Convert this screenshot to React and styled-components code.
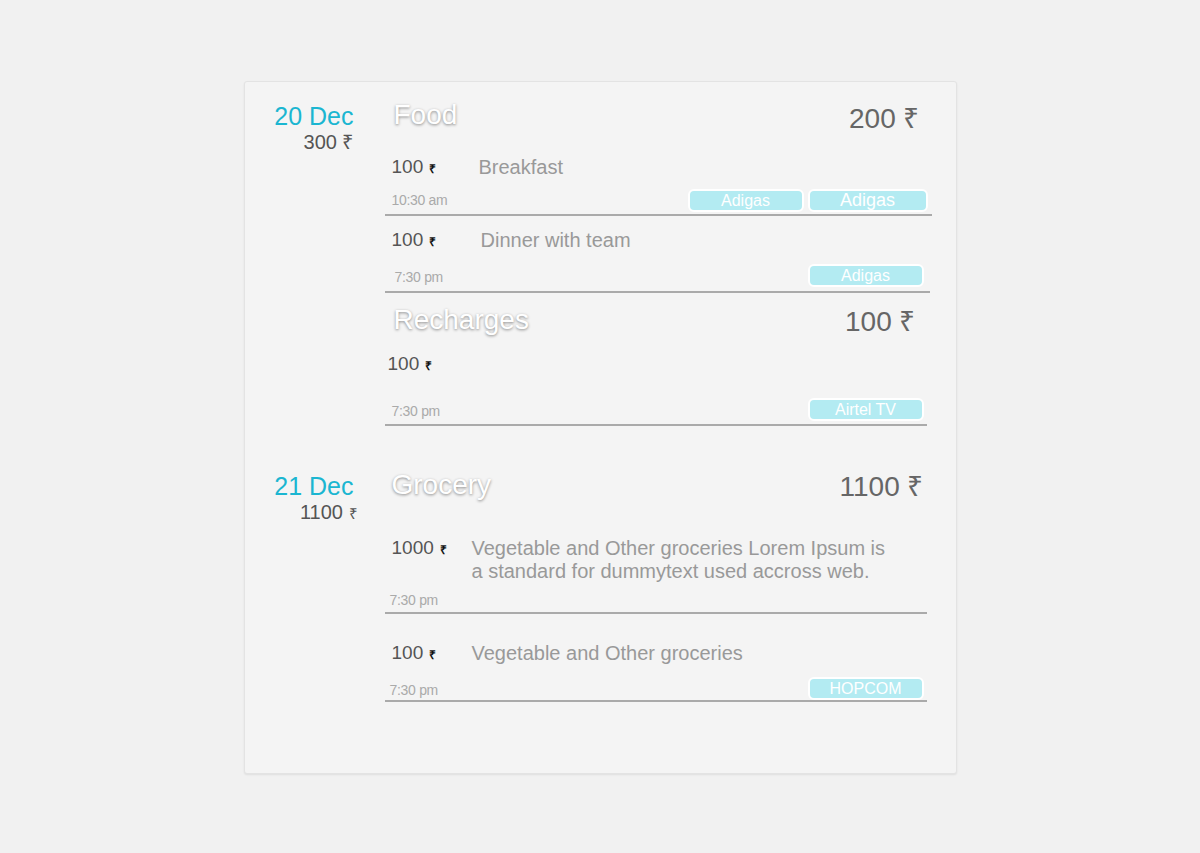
import React from "react";
import styled, { createGlobalStyle } from "styled-components";

const Global = createGlobalStyle`
  body {
    margin: 0;
    background: #f1f1f1;
    font-family: "Liberation Sans", Arial, sans-serif;
  }
`;

const Page = styled.div`
  display: flex;
  justify-content: center;
  padding-top: 81px;
  min-height: 853px;
  box-sizing: border-box;
`;

const Card = styled.div`
  width: 713px;
  height: 693px;
  box-sizing: border-box;
  background: #f4f4f4;
  border: 1px solid #e3e3e3;
  border-radius: 3px;
  box-shadow: 0 1px 2px rgba(0, 0, 0, 0.08);
  padding: 15px 24px 0 0;
`;

const Day = styled.div`
  display: grid;
  grid-template-columns: 112px 1fr;
  column-gap: 28px;
  margin-top: ${(p) => p.$top || 0}px;
`;

const DateCol = styled.div`
  text-align: right;
  padding-top: ${(p) => p.$pad || 5}px;
  padding-right: 3px;
`;

const DateLabel = styled.div`
  color: #1bb6d1;
  font-size: 25px;
  line-height: 28px;
`;

const DayTotal = styled.div`
  color: #555;
  font-size: 20px;
  line-height: 24px;
  margin-right: ${(p) => p.$shift || 0}px;
`;

const SmallRupee = styled.span`
  font-size: 15px;
`;

const Categories = styled.div`
  display: flex;
  flex-direction: column;
`;

const Category = styled.div`
  margin-top: ${(p) => p.$top || 0}px;
`;

const Header = styled.div`
  display: flex;
  justify-content: space-between;
  align-items: center;
  height: 36px;
  padding-left: ${(p) => p.$left || 9}px;
  padding-right: ${(p) => p.$right || 12}px;
`;

const Title = styled.div`
  color: #fff;
  font-size: 28px;
  text-shadow: 0 1px 3px rgba(0, 0, 0, 0.45);
`;

const Total = styled.div`
  color: #666;
  font-size: 28px;
  padding-top: ${(p) => p.$drop || 0}px;
`;

const Item = styled.div`
  margin-top: ${(p) => p.$top || 0}px;
  margin-right: ${(p) => p.$short || 0}px;
  padding: 0 5px ${(p) => p.$bottom || 0}px 7px;
  border-bottom: 2px solid #aaa;
`;

const MainRow = styled.div`
  display: grid;
  grid-template-columns: ${(p) => p.$amountWidth || 87}px 1fr;
  align-items: start;
  min-height: 24px;
`;

const Amount = styled.div`
  color: #555;
  font-size: 19px;
  line-height: 24px;
  margin-left: ${(p) => p.$shift || 0}px;
`;

const Rupee = styled.span`
  color: #111;
  font-size: 12px;
  line-height: 1;
  font-weight: bold;
  margin-left: 6px;
`;

const Desc = styled.div`
  color: #999;
  font-size: 20px;
  line-height: 23px;
  max-width: 420px;
  padding-top: 1px;
`;

const MetaRow = styled.div`
  display: flex;
  align-items: center;
  justify-content: space-between;
  height: 24px;
  margin-top: ${(p) => p.$top || 9}px;
`;

const Time = styled.div`
  color: #aaa;
  font-size: 14px;
  letter-spacing: -0.3px;
  margin-left: ${(p) => p.$shift || 0}px;
  padding-top: ${(p) => p.$drop || 0}px;
`;

const Tags = styled.div`
  display: flex;
  gap: 4px;
  margin-right: ${(p) => p.$right || 0}px;
`;

const Tag = styled.div`
  width: ${(p) => p.$w || 112}px;
  height: 19px;
  line-height: 19px;
  background: #b3ebf2;
  border: 2px solid #fff;
  border-radius: 6px;
  color: #fff;
  font-size: ${(p) => p.$size || 16}px;
  text-align: center;
`;

const Money = ({ value, shift }) => (
  <Amount $shift={shift}>
    {value}
    <Rupee>₹</Rupee>
  </Amount>
);

export default function App() {
  return (
    <>
      <Global />
      <Page>
        <Card>
          <Day>
            <DateCol>
              <DateLabel>20 Dec</DateLabel>
              <DayTotal>300 ₹</DayTotal>
            </DateCol>
            <Categories>
              <Category>
                <Header>
                  <Title>Food</Title>
                  <Total $drop={4}>200 ₹</Total>
                </Header>
                <Item $top={22} $bottom={2}>
                  <MainRow $amountWidth={87}>
                    <Money value="100" />
                    <Desc>Breakfast</Desc>
                  </MainRow>
                  <MetaRow $top={9}>
                    <Time>10:30 am</Time>
                    <Tags $right={-1}>
                      <Tag $w={112}>Adigas</Tag>
                      <Tag $w={116} $size={18}>Adigas</Tag>
                    </Tags>
                  </MetaRow>
                </Item>
                <Item $top={12} $bottom={4} $short={2}>
                  <MainRow $amountWidth={89}>
                    <Money value="100" />
                    <Desc>Dinner with team</Desc>
                  </MainRow>
                  <MetaRow $top={11}>
                    <Time $shift={3} $drop={3}>7:30 pm</Time>
                    <Tags $right={1}>
                      <Tag $w={112}>Adigas</Tag>
                    </Tags>
                  </MetaRow>
                </Item>
              </Category>
              <Category $top={9}>
                <Header $right={16}>
                  <Title>Recharges</Title>
                  <Total>100 ₹</Total>
                </Header>
                <Item $top={14} $bottom={3} $short={5}>
                  <MainRow>
                    <Money value="100" shift={-4} />
                    <Desc />
                  </MainRow>
                  <MetaRow $top={21}>
                    <Time $drop={4}>7:30 pm</Time>
                    <Tags $right={-2}>
                      <Tag $w={112}>Airtel TV</Tag>
                    </Tags>
                  </MetaRow>
                </Item>
              </Category>
            </Categories>
          </Day>
          <Day $top={41}>
            <DateCol $pad={5}>
              <DateLabel>21 Dec</DateLabel>
              <DayTotal $shift={-4}>
                1100 <SmallRupee>₹</SmallRupee>
              </DayTotal>
            </DateCol>
            <Categories>
              <Category>
                <Header $left={7} $right={8}>
                  <Title>Grocery</Title>
                  <Total>1100 ₹</Total>
                </Header>
                <Item $top={33} $short={5}>
                  <MainRow $amountWidth={80}>
                    <Money value="1000" />
                    <Desc>
                      Vegetable and Other groceries Lorem Ipsum is a standard for dummytext used accross web.
                    </Desc>
                  </MainRow>
                  <MetaRow $top={5}>
                    <Time $shift={-2}>7:30 pm</Time>
                  </MetaRow>
                </Item>
                <Item $top={27} $short={5}>
                  <MainRow $amountWidth={80}>
                    <Money value="100" />
                    <Desc>Vegetable and Other groceries</Desc>
                  </MainRow>
                  <MetaRow $top={11}>
                    <Time $shift={-2} $drop={4}>7:30 pm</Time>
                    <Tags $right={-2}>
                      <Tag $w={112}>HOPCOM</Tag>
                    </Tags>
                  </MetaRow>
                </Item>
              </Category>
            </Categories>
          </Day>
        </Card>
      </Page>
    </>
  );
}
